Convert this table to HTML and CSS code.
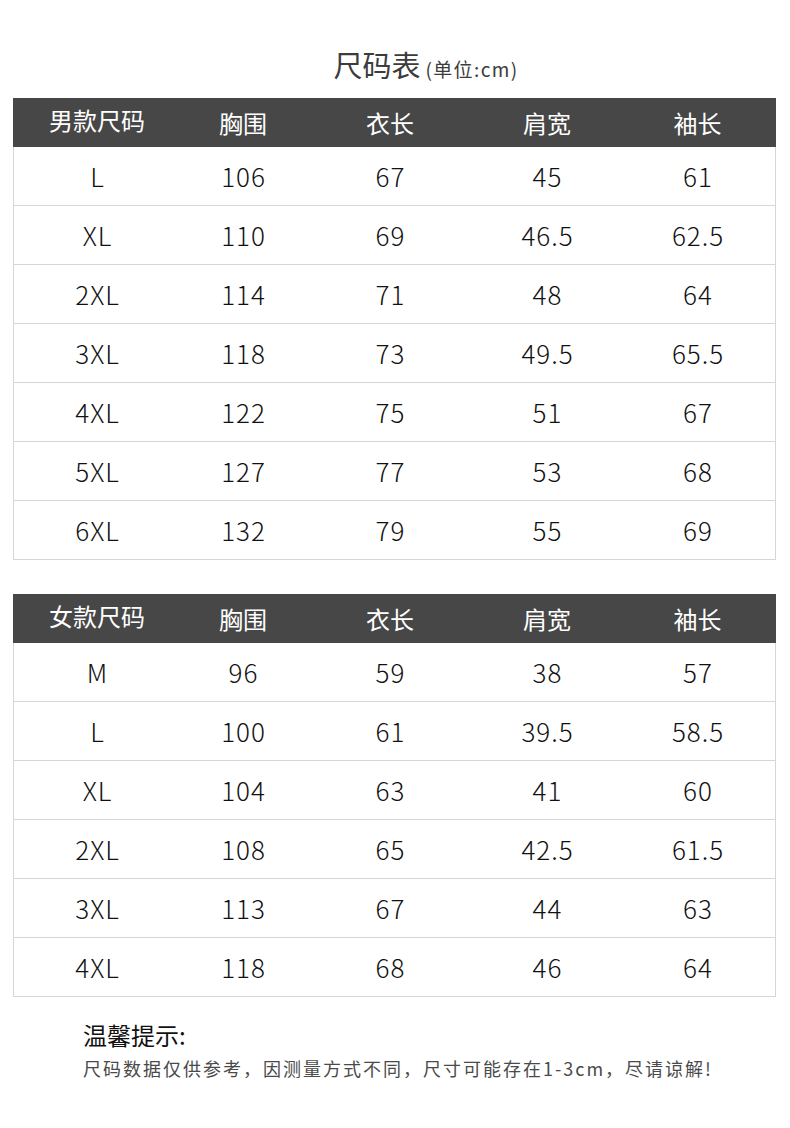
FILE: index.html
```html
<!DOCTYPE html>
<html lang="zh">
<head>
<meta charset="utf-8">
<link rel="stylesheet" href="styles.css">
</head>
<body>
<div class="page">
  <h1 class="title">尺码表<span class="unit">(单位:cm)</span></h1>

  <div class="table">
    <div class="row head"><div class="first">男款尺码</div><div>胸围</div><div>衣长</div><div>肩宽</div><div>袖长</div></div>
    <div class="row"><div>L</div><div>106</div><div>67</div><div>45</div><div>61</div></div>
    <div class="row"><div>XL</div><div>110</div><div>69</div><div>46.5</div><div>62.5</div></div>
    <div class="row"><div>2XL</div><div>114</div><div>71</div><div>48</div><div>64</div></div>
    <div class="row"><div>3XL</div><div>118</div><div>73</div><div>49.5</div><div>65.5</div></div>
    <div class="row"><div>4XL</div><div>122</div><div>75</div><div>51</div><div>67</div></div>
    <div class="row"><div>5XL</div><div>127</div><div>77</div><div>53</div><div>68</div></div>
    <div class="row"><div>6XL</div><div>132</div><div>79</div><div>55</div><div>69</div></div>
  </div>

  <div class="table second">
    <div class="row head"><div class="first">女款尺码</div><div>胸围</div><div>衣长</div><div>肩宽</div><div>袖长</div></div>
    <div class="row"><div>M</div><div>96</div><div>59</div><div>38</div><div>57</div></div>
    <div class="row"><div>L</div><div>100</div><div>61</div><div>39.5</div><div>58.5</div></div>
    <div class="row"><div>XL</div><div>104</div><div>63</div><div>41</div><div>60</div></div>
    <div class="row"><div>2XL</div><div>108</div><div>65</div><div>42.5</div><div>61.5</div></div>
    <div class="row"><div>3XL</div><div>113</div><div>67</div><div>44</div><div>63</div></div>
    <div class="row"><div>4XL</div><div>118</div><div>68</div><div>46</div><div>64</div></div>
  </div>

  <div class="tips">
    <div class="tips-title">温馨提示:</div>
    <div class="tips-text">尺码数据仅供参考，因测量方式不同，尺寸可能存在1-3cm，尽请谅解!</div>
  </div>
</div>
</body>
</html>
```

FILE: styles.css
```css
html, body {
  margin: 0;
  padding: 0;
  background: #fff;
}
body {
  font-family: "Noto Sans CJK SC", "Noto Sans", sans-serif;
  color: #222;
}
.page {
  width: 790px;
  padding-top: 42px;
}
.title {
  margin: 0;
  height: 56px;
  font-size: 29px;
  font-weight: 400;
  line-height: 44px;
  color: #3c3c3c;
  text-align: center;
  padding-left: 62px;
  box-sizing: border-box;
}
.unit {
  font-size: 19px;
  letter-spacing: 1.4px;
  margin-left: 5px;
}
.table {
  margin: 0 14px 0 13px;
  border-left: 1px solid #d6d6d6;
  border-right: 1px solid #d6d6d6;
}
.table.second {
  margin-top: 34px;
}
.row {
  display: grid;
  grid-template-columns: 166px 126px 168px 146px 1fr;
  height: 58px;
  border-bottom: 1px solid #d6d6d6;
  align-items: center;
  text-align: center;
  font-size: 26px;
  font-weight: 300;
  letter-spacing: 1px;
  color: #111;
}
.row > div {
  padding-left: 1px;
  padding-bottom: 2px;
}
.row.head {
  height: 49px;
  border-bottom: none;
  background: #474747;
  color: #fff;
  font-size: 24px;
  font-weight: 400;
  letter-spacing: 0;
  margin: 0 -1px;
  padding: 0 1px 0 1px;
}
.row.head > div {
  padding-left: 0;
  padding-bottom: 0;
}
.row.head > .first {
  padding-bottom: 6px;
}
.tips {
  padding: 22px 0 0 83px;
}
.tips-title {
  font-size: 24px;
  font-weight: 400;
  color: #111;
  line-height: 32px;
}
.tips-text {
  margin-top: 2px;
  font-size: 18px;
  letter-spacing: 2px;
  color: #4a4a4a;
  line-height: 30px;
}
```
